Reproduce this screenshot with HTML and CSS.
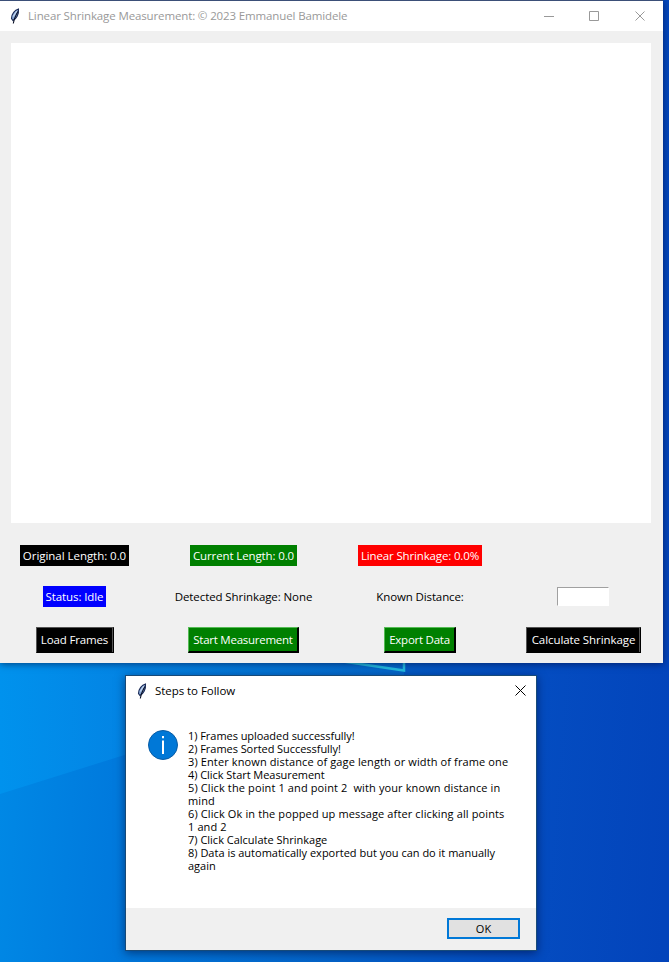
FILE: index.html
```html
<!DOCTYPE html>
<html lang="en">
<head>
<meta charset="utf-8">
<title>Linear Shrinkage Measurement</title>
<link rel="stylesheet" href="styles.css">
</head>
<body>
<svg width="0" height="0" class="defs" aria-hidden="true">
  <symbol id="feather" viewBox="0 0 12 18">
    <path d="M9.500 2C6 3 2.500 7 2.500 11.500l1.500 2C7.500 12 10 7 9.500 2z" fill="#86a6d4" stroke="#1c2c58" stroke-width="1.100"/>
    <path d="M8.800 4.500C7.500 8 5.200 10 4.300 16.500" fill="none" stroke="#0a1026" stroke-width="1.100"/>
    <path d="M7.700 4L4.300 9.500" stroke="#c5d8f2" stroke-width="1.200"/>
  </symbol>
</svg>
<main class="desktop">
  <svg class="wallpaper" viewBox="0 0 669 962" aria-hidden="true">
    <defs>
      <linearGradient id="upper" gradientUnits="userSpaceOnUse" x1="0" x2="404" y1="0" y2="0"><stop offset="0" stop-color="#0092ed"/><stop offset=".31" stop-color="#0384e4"/><stop offset="1" stop-color="#0568cc"/></linearGradient>
      <linearGradient id="lower" gradientUnits="userSpaceOnUse" x1="0" y1="800" x2="669" y2="850">
        <stop offset="0" stop-color="#0088e5"/><stop offset=".19" stop-color="#0078dc"/><stop offset=".5" stop-color="#0463c9"/><stop offset=".75" stop-color="#044ec2"/><stop offset="1" stop-color="#0344bb"/>
      </linearGradient>
    </defs>
    <rect width="669" height="962" fill="url(#lower)"/>
    <path d="M0 660H404V690H150V747L0 794z" fill="url(#upper)"/>
    <path d="M340 661L404 670.500V660" fill="none" stroke="#25bfe4" stroke-width="2.500"/>
  </svg>

  <section class="window app">
    <header class="titlebar">
      <svg class="feather"><use href="#feather"/></svg>
      <h1 class="title app-title">Linear Shrinkage Measurement: © 2023 Emmanuel Bamidele</h1>
      <svg class="controls" viewBox="0 0 102 10" fill="none" stroke="#999" aria-hidden="true">
        <path d="M0 5.500h10M45.500.5h9v9h-9zM91.500.5l9 9M100.500.5l-9 9"/>
      </svg>
    </header>
    <div class="client">
      <div class="canvas"></div>
      <div class="panel">
        <span class="label black original">Original Length: 0.0</span>
        <span class="label green current">Current Length: 0.0</span>
        <span class="label red linear">Linear Shrinkage: 0.0%</span>
        <span></span>
        <span class="label blue status">Status: Idle</span>
        <span class="label detected">Detected Shrinkage: None</span>
        <span class="label known">Known Distance:</span>
        <input class="entry" type="text" aria-label="Known Distance">
        <button class="button black load">Load Frames</button>
        <button class="button green start">Start Measurement</button>
        <button class="button green export">Export Data</button>
        <button class="button black calculate">Calculate Shrinkage</button>
      </div>
    </div>
  </section>

  <section class="window dialog">
    <header class="titlebar">
      <svg class="feather"><use href="#feather"/></svg>
      <h2 class="title dialog-title">Steps to Follow</h2>
      <svg class="close" viewBox="0 0 11 11" stroke="#000" aria-hidden="true"><path d="M.5.5l10 10M10.500.5l-10 10"/></svg>
    </header>
    <div class="message">
      <svg class="info" viewBox="0 0 30 30" aria-hidden="true">
        <circle cx="15" cy="15" r="14.500" fill="#0078d7" stroke="#095ca4"/>
        <path d="M14 6h2v2.300h-2zM14 10.500h2V24h-2z" fill="#fff"/>
      </svg>
      <div class="steps">
        <div class="step">1) Frames uploaded successfully!</div>
        <div class="step">2) Frames Sorted Successfully!</div>
        <div class="step wide">3) Enter known distance of gage length or width of frame one</div>
        <div class="step">4) Click Start Measurement</div>
        <div class="step wide">5) Click the point 1 and point 2  with your known distance in<br>mind</div>
        <div class="step wide">6) Click Ok in the popped up message after clicking all points<br>1 and 2</div>
        <div class="step last">7) Click Calculate Shrinkage</div>
        <div class="step last">8) Data is automatically exported but you can do it manually<br>again</div>
      </div>
    </div>
    <footer class="footer"><button class="ok">OK</button></footer>
  </section>
</main>
</body>
</html>
```
FILE: styles.css
```css
* { box-sizing: border-box; }
body { margin: 0; font: 11.5px/16px "Open Sans", "Noto Sans", sans-serif; color: #000; }
.defs { position: absolute; }
.desktop { position: relative; width: 669px; height: 962px; overflow: hidden; background: #044ec2; }
.wallpaper { display: block; width: 669px; height: 962px; }
.window { position: absolute; display: flex; flex-direction: column; }
.app { left: 0; top: 0; width: 663px; height: 663px; border-top: 1px solid #3b4f78; background: #f0f0f0; box-shadow: 0 1px 7px rgba(0, 0, 40, .55); }
.titlebar { display: flex; align-items: center; height: 30px; flex: none; background: #fff; }
.feather { width: 12px; height: 18px; flex: none; }
.title { margin: 0; font-size: 11.5px; font-weight: 400; white-space: nowrap; }
.app .titlebar { padding-left: 9px; color: #999; }
.app-title { margin-left: 7px; letter-spacing: -.13px; }
.controls { width: 102px; height: 10px; margin: 0 17px 0 auto; }
.client { padding: 12px 0 0; }
.canvas { width: 640px; height: 480px; margin-left: 11px; background: #fff; }
.panel { display: grid; grid-template-columns: 149px 189px 164px 161px; grid-template-rows: 41px 41px 46px; margin-top: 12px; align-items: center; justify-items: center; }
.label { height: 21px; line-height: 21px; text-align: center; white-space: nowrap; letter-spacing: -.12px; }
.black { background: #000; color: #fff; }
.green { background: #008000; color: #fff; }
.red { background: #f00; color: #fff; }
.blue { background: #00f; color: #fff; }
.original { width: 109px; letter-spacing: -.04px; }
.current { width: 107px; }
.linear { width: 124px; letter-spacing: -.15px; }
.status { width: 63px; letter-spacing: -.1px; }
.detected { letter-spacing: -.09px; }
.button { height: 26px; padding: 0; border: 1px solid; border-width: 1px 2px 2px 1px; font: inherit; line-height: 22px; letter-spacing: -.25px; white-space: nowrap; }
.button.black { border-color: #555 #000 #000 #555; border-width: 1px; box-shadow: inset -1px 0 #555; }
.button.green { border-color: #5b5 #000 #000 #5b5; }
.load { width: 78px; }
.button.load { letter-spacing: -.15px; }
.start { width: 111px; }
.export { width: 72px; }
.button.calculate { width: 115px; margin-left: 2px; letter-spacing: -.08px; }
.entry { width: 52px; height: 19px; padding: 0; border: 1px solid; border-color: #a0a0a0 #fff #fff #a0a0a0; background: #fff; }
.dialog { left: 125px; top: 675px; width: 412px; height: 276px; border: 1px solid #174a78; background: #fff; box-shadow: 0 2px 9px rgba(0, 0, 40, .5); }
.dialog .titlebar { height: 29px; padding-left: 10px; }
.dialog-title { margin-left: 7px; letter-spacing: -.05px; }
.close { width: 11px; height: 11px; margin: 0 10px 0 auto; }
.message { display: flex; flex: 1; padding-top: 24px; }
.info { width: 30px; height: 30px; margin: 1px 0 0 22px; flex: none; }
.steps { margin-left: 10px; font-size: 11px; line-height: 13px; }
.step { white-space: pre; letter-spacing: -.05px; }
.step.wide { letter-spacing: .12px; }
.step.last { letter-spacing: 0; }
.footer { display: flex; justify-content: flex-end; height: 42px; padding: 10px 16px; background: #f0f0f0; }
.ok { width: 73px; height: 21px; padding: 0; border: 2px solid #0078d7; background: #e1e1e1; font: 11px/17px "Open Sans", sans-serif; }
```
